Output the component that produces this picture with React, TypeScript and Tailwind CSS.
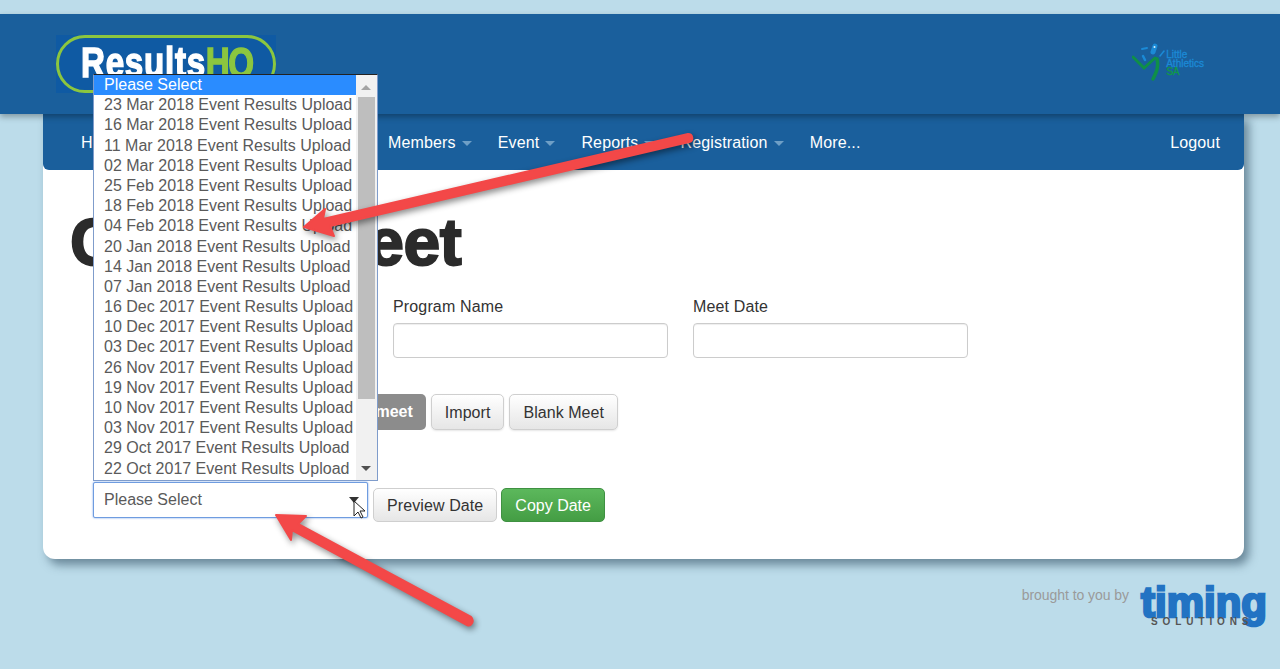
const options = [
  '23 Mar 2018 Event Results Upload',
  '16 Mar 2018 Event Results Upload',
  '11 Mar 2018 Event Results Upload',
  '02 Mar 2018 Event Results Upload',
  '25 Feb 2018 Event Results Upload',
  '18 Feb 2018 Event Results Upload',
  '04 Feb 2018 Event Results Upload',
  '20 Jan 2018 Event Results Upload',
  '14 Jan 2018 Event Results Upload',
  '07 Jan 2018 Event Results Upload',
  '16 Dec 2017 Event Results Upload',
  '10 Dec 2017 Event Results Upload',
  '03 Dec 2017 Event Results Upload',
  '26 Nov 2017 Event Results Upload',
  '19 Nov 2017 Event Results Upload',
  '10 Nov 2017 Event Results Upload',
  '03 Nov 2017 Event Results Upload',
  '29 Oct 2017 Event Results Upload',
  '22 Oct 2017 Event Results Upload',
];

const NavItem = ({ label }: { label: string }) => (
  <div className="flex items-center mr-[26px]">
    <span>{label}</span>
    <span className="ml-[6px] mt-[2px] w-0 h-0 border-x-[5px] border-x-transparent border-t-[5px] border-t-[#6f9fc6]" />
  </div>
);

const DefaultButton = ({ label }: { label: string }) => (
  <button className="h-[36px] pt-[1px] px-[13px] rounded-[5px] border border-[#cfcfcf] bg-gradient-to-b from-white to-[#e6e6e6] text-[#333] text-[16px] tracking-[0.05px] shadow-[0_1px_2px_rgba(0,0,0,0.1)]">
    {label}
  </button>
);

const Logo = () => (
  <div className="w-[220px] h-[58px] bg-[#0f5aa3]">
    <div className="w-full h-full rounded-[29px] border-[3px] border-[#8cc63f] pl-[22px] pt-[4px]">
      <div className="origin-left scale-x-[0.79] whitespace-nowrap text-[42px] leading-[42px] font-bold text-white tracking-[0.9px] [-webkit-text-stroke:1.5px_white]">
        Results
        <span className="text-[#8cc63f] tracking-[-2px] [-webkit-text-stroke:1.5px_#8cc63f]">HQ</span>
      </div>
    </div>
  </div>
);

const AthleticsLogo = () => (
  <div className="flex items-start">
    <svg width="34" height="40" viewBox="0 0 34 40" fill="none" strokeLinecap="round">
      <path d="M1 16 L12 27 L23 17" stroke="#0f8f48" strokeWidth="3" />
      <path d="M25 18 C27 26 24 32 21 38" stroke="#0f8f48" strokeWidth="3.5" />
      <path d="M21 11 L23 5" stroke="#1b8ad6" strokeWidth="5" />
      <path d="M10 8 L15 7" stroke="#1b8ad6" strokeWidth="2" />
      <path d="M11 15 L13 19" stroke="#1b8ad6" strokeWidth="2.5" />
      <path d="M28 15 L32 10" stroke="#1b8ad6" strokeWidth="1.5" />
      <circle cx="22.5" cy="6" r="1" fill="#d8f0ff" />
    </svg>
    <div className="mt-[10px] text-[10px] leading-[8.5px] text-[#1b8ad6] [-webkit-text-stroke:0.3px_#1b8ad6]">
      <div>Little</div>
      <div>Athletics</div>
      <div className="text-[#109a48] [-webkit-text-stroke:0.3px_#109a48]">SA</div>
    </div>
  </div>
);

const TimingLogo = () => (
  <div className="relative w-[126px] h-[44px] pt-[3px]">
    <div className="text-[42px] leading-[32px] font-bold text-[#2273c3] [-webkit-text-stroke:2.5px_#2273c3]">
      timing
    </div>
    <div className="absolute left-[10px] top-[33px] text-[10px] leading-[10px] font-bold text-[#555] tracking-[4.9px]">
      SOLUTIONS
    </div>
  </div>
);

const Dropdown = () => (
  <div className="absolute z-20 left-[93px] top-[74px] w-[285px] h-[407px] flex bg-white border border-[#7f9ccb] border-t-[#222] text-[16px] text-[#5a5a5a]">
    <div className="w-[262px]">
      <div className="h-[20.2px] leading-[20px] pl-[10px] bg-[#2a8cff] text-white">Please Select</div>
      {options.map(o => (
        <div key={o} className="h-[20.2px] leading-[20px] pl-[10px] whitespace-nowrap">{o}</div>
      ))}
    </div>
    <div className="w-[21px] bg-[#f1f1f1] relative">
      <div className="absolute left-[5px] top-[10px] w-0 h-0 border-x-[5px] border-x-transparent border-b-[5px] border-b-[#a3a3a3]" />
      <div className="absolute left-[2px] top-[22px] w-[17px] h-[302px] bg-[#bebebe]" />
      <div className="absolute left-[5px] top-[391px] w-0 h-0 border-x-[5px] border-x-transparent border-t-[5px] border-t-[#505050]" />
    </div>
  </div>
);

// Red annotation arrows and the mouse pointer lying over the page
const Annotations = () => (
  <svg className="absolute z-30 inset-0 w-[1280px] h-[669px] pointer-events-none" viewBox="0 0 1280 669">
    <g className="drop-shadow-[2px_3px_3px_rgba(0,0,0,0.45)]" fill="#f34848" stroke="#f34848" strokeLinejoin="round" strokeWidth="2">
      <path d="M304 227 L325 209 L323 219 L688 134 C693 134 694 141 689 142 L330 226 L334 236 Z" />
      <path d="M276 515 L306 516 L298 524 L471 617 C475 621 471 627 467 625 L292 530 L291 540 Z" />
    </g>
    <path d="M354 501 L354 516 L358 512 L361 518 L363 517 L360 511 L365 511 Z" fill="white" stroke="#222" strokeWidth="1" />
  </svg>
);

export default function App() {
  return (
    <div className="relative w-[1280px] h-[669px] overflow-hidden bg-[#bcdcea] [font-family:'Liberation_Sans',Arial,sans-serif]">
      <div className="pt-[14px]">
        <div className="relative z-10 h-[100px] bg-[#1a5f9c] flex items-start justify-between pl-[56px] pr-[76px] shadow-[0_3px_6px_rgba(0,0,0,0.3)]">
          <div className="mt-[21px]"><Logo /></div>
          <div className="mt-[27px]"><AthleticsLogo /></div>
        </div>

        <div className="ml-[43px] w-[1201px] rounded-b-[12px] bg-white shadow-[5px_6px_10px_rgba(40,70,90,0.55)]">
          <div className="h-[56px] pt-[1px] rounded-b-[6px] bg-[#1a5f9c] flex items-center pl-[38px] pr-[24px] text-[16px] tracking-[0.15px] text-white">
            <div className="w-[307px]">Home</div>
            <NavItem label="Members" />
            <NavItem label="Event" />
            <NavItem label="Reports" />
            <NavItem label="Registration" />
            <div>More...</div>
            <div className="ml-auto">Logout</div>
          </div>

          <div className="h-[389px] pl-[27px]">
            <h1 className="pt-[36px] h-[126px] text-[66px] leading-[72px] font-bold text-[#2b2b2b] tracking-[-0.5px] [word-spacing:4px] [-webkit-text-stroke:2px_#2b2b2b]">
              Copy a Meet
            </h1>

            <div className="ml-[23px] grid grid-cols-[275px_275px_275px] gap-x-[25px] text-[16px] tracking-[0.15px] text-[#333]">
              {['Meet Name', 'Program Name', 'Meet Date'].map(label => (
                <div key={label}>
                  <div className="h-[21px] leading-[21px]">{label}</div>
                  <div className="mt-[6px] h-[35px] rounded-[4px] border border-[#ccc] bg-white shadow-[inset_0_1px_1px_rgba(0,0,0,0.07)]" />
                </div>
              ))}
            </div>

            <div className="ml-[23px] mt-[36px] flex gap-[5px]">
              <button className="ml-[225px] h-[36px] px-[13px] rounded-[5px] bg-[#8c8c8c] text-white font-bold text-[16px]">
                Copy meet
              </button>
              <DefaultButton label="Import" />
              <DefaultButton label="Blank Meet" />
            </div>

            <div className="ml-[23px] mt-[52px] flex items-start gap-[5px]">
              <div className="w-[275px] h-[36px] rounded-[2px] border border-[#6f9ce0] bg-white flex items-center justify-between pl-[10px] pr-[8px] text-[16px] text-[#5a5a5a] shadow-[0_0_2px_rgba(82,140,230,0.9)]">
                <span className="-mt-[1px]">Please Select</span>
                <span className="-mt-[1px] w-0 h-0 border-x-[5px] border-x-transparent border-t-[6px] border-t-[#333]" />
              </div>
              <div className="mt-[6px] flex gap-[4px]">
                <button className="h-[34px] pt-[1px] px-[13px] rounded-[5px] border border-[#cfcfcf] bg-gradient-to-b from-white to-[#e6e6e6] text-[#333] text-[16px] tracking-[0.1px]">
                  Preview Date
                </button>
                <button className="h-[34px] pt-[1px] px-[13px] rounded-[5px] border border-[#3f9142] bg-gradient-to-b from-[#5cb85c] to-[#449d44] text-white text-[16px]">
                  Copy Date
                </button>
              </div>
            </div>
          </div>
        </div>

        <div className="mt-[25px] pr-[13px] flex items-start justify-end gap-[12px]">
          <span className="mt-[1px] text-[14px] leading-[20px] tracking-[-0.05px] text-[#9a9a9a]">brought to you by</span>
          <TimingLogo />
        </div>
      </div>

      <Dropdown />
      <Annotations />
    </div>
  );
}
